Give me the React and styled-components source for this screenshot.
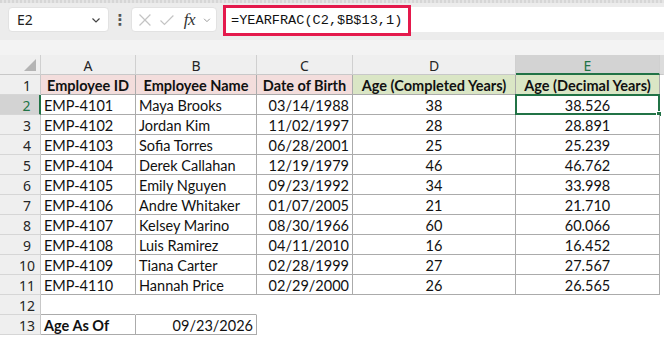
import React from "react";
import styled, { createGlobalStyle } from "styled-components";

const GlobalStyle = createGlobalStyle`
  html, body {
    margin: 0;
    padding: 0;
    background: #ffffff;
  }
  * {
    box-sizing: border-box;
  }
`;

const GREEN = "#217346";
const LINE = "#ababab";

const columns = [
  { key: "A", width: 95 },
  { key: "B", width: 121 },
  { key: "C", width: 96 },
  { key: "D", width: 163 },
  { key: "E", width: 144 },
];

const rows = [
  ["EMP-4101", "Maya Brooks", "03/14/1988", "38", "38.526"],
  ["EMP-4102", "Jordan Kim", "11/02/1997", "28", "28.891"],
  ["EMP-4103", "Sofia Torres", "06/28/2001", "25", "25.239"],
  ["EMP-4104", "Derek Callahan", "12/19/1979", "46", "46.762"],
  ["EMP-4105", "Emily Nguyen", "09/23/1992", "34", "33.998"],
  ["EMP-4106", "Andre Whitaker", "01/07/2005", "21", "21.710"],
  ["EMP-4107", "Kelsey Marino", "08/30/1966", "60", "60.066"],
  ["EMP-4108", "Luis Ramirez", "04/11/2010", "16", "16.452"],
  ["EMP-4109", "Tiana Carter", "02/28/1999", "27", "27.567"],
  ["EMP-4110", "Hannah Price", "02/29/2000", "26", "26.565"],
];

const headers = [
  { text: "Employee ID", tone: "pink" },
  { text: "Employee Name", tone: "pink" },
  { text: "Date of Birth", tone: "pink" },
  { text: "Age (Completed Years)", tone: "green" },
  { text: "Age (Decimal Years)", tone: "green" },
];

const aligns = ["left", "left", "right", "center", "center"];

const tones = {
  pink: "#f3dddc",
  green: "#dae6c5",
  none: "#ffffff",
};

const App = () => {
  return (
    <Page>
      <GlobalStyle />
      <TopStrip />
      <FormulaBar>
        <NameBox>
          <span>E2</span>
          <Chevron />
        </NameBox>
        <Dots>⋮</Dots>
        <FxBox>
          <IconX />
          <IconCheck />
          <Fx>fx</Fx>
          <Chevron small />
        </FxBox>
        <FormulaArea>
          <Highlight>=YEARFRAC(C2,$B$13,1)</Highlight>
          <FormulaRest />
        </FormulaArea>
      </FormulaBar>
      <Band />

      <Sheet>
        <Corner>
          <CornerTriangle />
        </Corner>
        {columns.map((c) => (
          <ColHeader key={c.key} $active={c.key === "E"}>
            {c.key}
          </ColHeader>
        ))}
        <ColHeader $rest />

        <RowHeader>1</RowHeader>
        {headers.map((h) => (
          <Cell key={h.text} $bg={tones[h.tone]} $align="center" $bold $border>
            {h.text}
          </Cell>
        ))}
        <Blank />

        {rows.map((r, i) => (
          <React.Fragment key={r[0]}>
            <RowHeader $active={i === 0}>{i + 2}</RowHeader>
            {r.map((v, j) => (
              <Cell key={j} $align={aligns[j]} $border>
                {v}
                {i === 0 && j === 4 && (
                  <Selection>
                    <FillHandle />
                  </Selection>
                )}
              </Cell>
            ))}
            <Blank />
          </React.Fragment>
        ))}

        <RowHeader>12</RowHeader>
        <Cell $underline />
        <Cell $underline />
        <Cell />
        <Cell />
        <Cell />
        <Blank />

        <RowHeader>13</RowHeader>
        <Cell $bold $border>
          Age As Of
        </Cell>
        <Cell $align="right" $border>
          09/23/2026
        </Cell>
        <Cell />
        <Cell />
        <Cell />
        <Blank />
      </Sheet>
    </Page>
  );
};

const Chevron = ({ small }) => (
  <svg
    width={small ? 10 : 12}
    height={small ? 10 : 12}
    viewBox="0 0 12 12"
    fill="none"
    stroke={small ? "#9a9a9a" : "#444"}
    strokeWidth="1.2"
  >
    <path d="M2.5 4.5 L6 8 L9.5 4.5" />
  </svg>
);

const IconX = () => (
  <svg width="14" height="14" viewBox="0 0 14 14" stroke="#c4c4c4" strokeWidth="1.2">
    <path d="M1.5 1.5 L12.5 12.5 M12.5 1.5 L1.5 12.5" />
  </svg>
);

const IconCheck = () => (
  <svg width="16" height="14" viewBox="0 0 16 14" fill="none" stroke="#c4c4c4" strokeWidth="1.2">
    <path d="M1.5 7.5 L5.5 11.5 L14.5 2.5" />
  </svg>
);

const Page = styled.div`
  width: 664px;
  height: 337px;
  overflow: hidden;
  background: #ffffff;
  font-family: Lato, "Liberation Sans", sans-serif;
`;

const TopStrip = styled.div`
  height: 3px;
  background: repeating-linear-gradient(90deg, #d6d6d6 0 2px, #e4e4e4 2px 4px);
`;

const FormulaBar = styled.div`
  height: 37px;
  display: flex;
  align-items: center;
  padding: 0 0 4px 8px;
  background: #ececec;
`;

const NameBox = styled.div`
  width: 101px;
  height: 25px;
  display: flex;
  align-items: center;
  justify-content: space-between;
  padding: 0 6px 0 8px;
  background: #ffffff;
  border: 1px solid #e2e2e2;
  border-radius: 4px;
  font-family: "Noto Sans", "Open Sans", sans-serif;
  font-size: 14px;
  color: #222;
`;

const Dots = styled.div`
  width: 22px;
  text-align: center;
  font-size: 15px;
  font-weight: bold;
  color: #555;
  font-family: "DejaVu Sans", sans-serif;
`;

const FxBox = styled.div`
  width: 86px;
  height: 25px;
  display: flex;
  align-items: center;
  gap: 7px;
  padding: 0 4px 0 6px;
  background: #ffffff;
  border: 1px solid #e2e2e2;
  border-radius: 4px;
`;

const Fx = styled.span`
  font-family: "Liberation Serif", serif;
  font-style: italic;
  font-size: 17px;
  color: #333;
  margin-left: 2px;
  letter-spacing: -0.5px;
`;

const FormulaArea = styled.div`
  flex: 1;
  display: flex;
  align-items: center;
  margin-left: 6px;
`;

const Highlight = styled.div`
  width: 188px;
  height: 31px;
  display: flex;
  align-items: center;
  padding-left: 5px;
  border: 3px solid #e4194c;
  background: #ffffff;
  font-family: "Liberation Mono", monospace;
  font-size: 13.6px;
  color: #111;
  margin-top: 2px;
`;

const FormulaRest = styled.div`
  flex: 1;
  height: 25px;
  background: #ffffff;
`;

const Band = styled.div`
  height: 15px;
  background: #f3f3f3;
`;

const Sheet = styled.div`
  display: grid;
  grid-template-columns: 41px ${columns.map((c) => `${c.width}px`).join(" ")} 1fr;
  grid-auto-rows: 20px;
`;

const HeaderBase = styled.div`
  display: flex;
  align-items: center;
  font-family: "Noto Sans", "Open Sans", sans-serif;
  font-size: 14px;
  color: #262626;
  background: #efefef;
`;

const Corner = styled(HeaderBase)`
  position: relative;
  border-right: 1px solid #d0d0d0;
  border-bottom: 1px solid #c8c8c8;
`;

const CornerTriangle = styled.div`
  position: absolute;
  right: 4px;
  bottom: 3px;
  width: 0;
  height: 0;
  border-left: 12px solid transparent;
  border-bottom: 12px solid #b4b4b4;
`;

const ColHeader = styled(HeaderBase)`
  justify-content: center;
  padding-top: 2px;
  background: ${({ $active, $rest }) => ($active ? "#d3d3d3" : $rest ? "#dcdcdc" : "#efefef")};
  color: ${({ $active }) => ($active ? GREEN : "#262626")};
  border-right: 1px solid ${({ $rest }) => ($rest ? "#dcdcdc" : "#d0d0d0")};
  border-bottom: ${({ $active }) => ($active ? `2px solid ${GREEN}` : "1px solid #c8c8c8")};
`;

const RowHeader = styled(HeaderBase)`
  justify-content: center;
  padding-left: 14px;
  padding-top: 1px;
  background: ${({ $active }) => ($active ? "#d3d3d3" : "#efefef")};
  color: ${({ $active }) => ($active ? GREEN : "#262626")};
  border-bottom: 1px solid #d6d6d6;
  border-right: ${({ $active }) => ($active ? `2px solid ${GREEN}` : "1px solid #c8c8c8")};
`;

const Cell = styled.div`
  position: relative;
  display: flex;
  align-items: center;
  justify-content: ${({ $align }) =>
    $align === "center" ? "center" : $align === "right" ? "flex-end" : "flex-start"};
  padding: 1px 3px 0 3px;
  background: ${({ $bg }) => $bg || "#ffffff"};
  font-size: 14.5px;
  font-weight: ${({ $bold }) => ($bold ? 700 : 400)};
  color: #111;
  white-space: nowrap;
  border-right: 1px solid ${({ $border }) => ($border ? LINE : "transparent")};
  border-bottom: 1px solid ${({ $border, $underline }) => ($border || $underline ? LINE : "transparent")};
`;

const Blank = styled.div`
  background: #ffffff;
`;

const Selection = styled.div`
  position: absolute;
  left: -1px;
  top: -1px;
  right: -1px;
  bottom: -1px;
  border: 2px solid ${GREEN};
  pointer-events: none;
`;

const FillHandle = styled.div`
  position: absolute;
  right: -4px;
  bottom: -4px;
  width: 6px;
  height: 6px;
  background: ${GREEN};
  border: 1px solid #ffffff;
`;

export default App;
